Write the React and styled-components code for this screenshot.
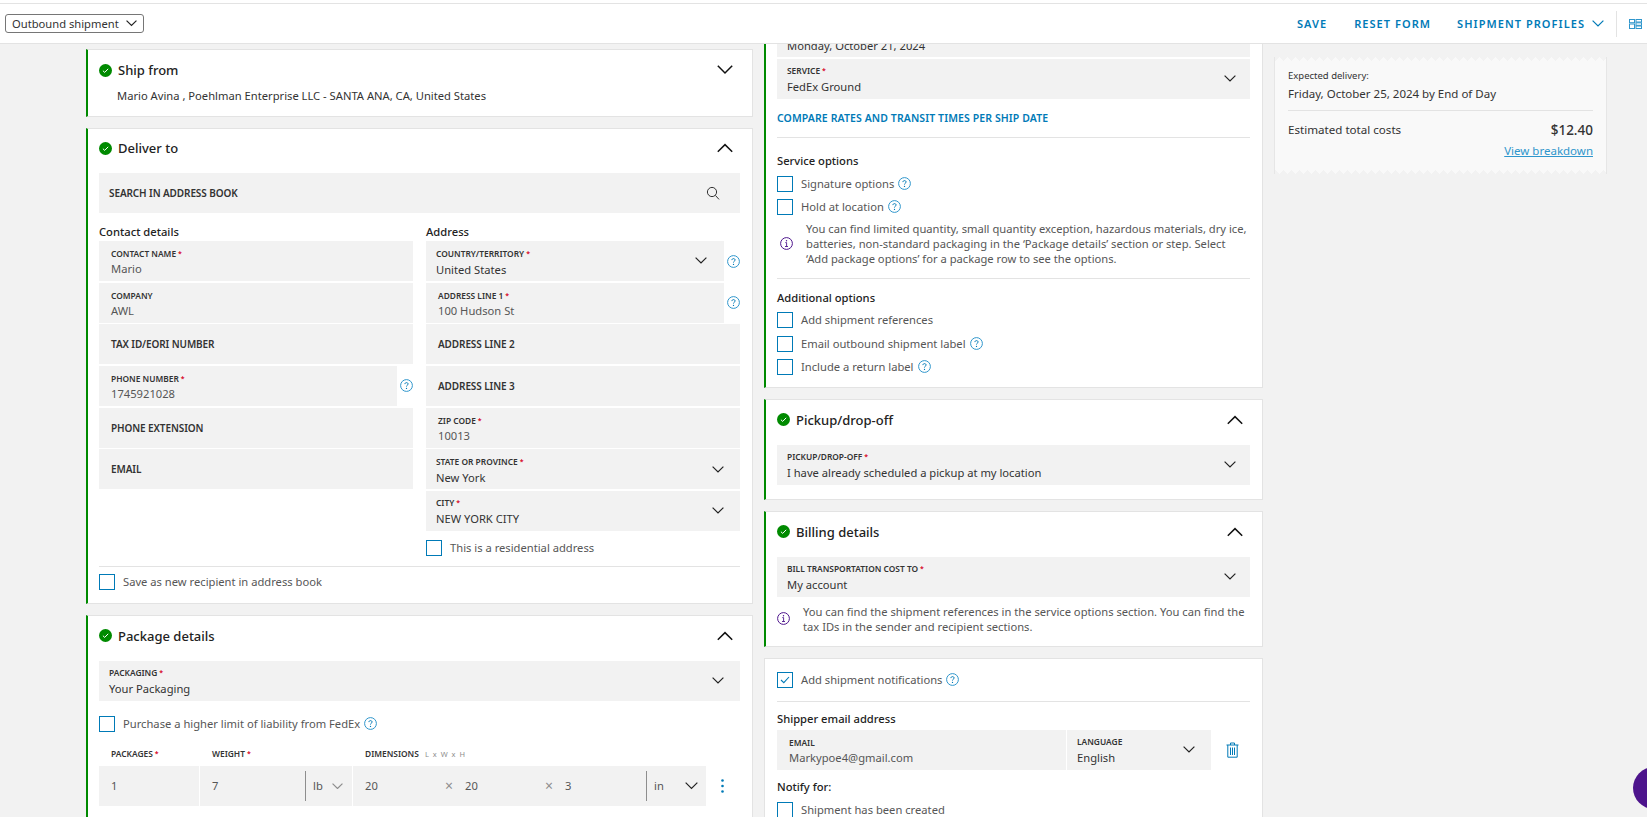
import React from "react";
import styled, { createGlobalStyle } from "styled-components";

const GlobalStyle = createGlobalStyle`
  * { box-sizing: border-box; }
  html, body { margin: 0; height: 100%; overflow: hidden; }
  body {
    background: #f2f2f2;
    font-family: "Noto Sans", "Open Sans", sans-serif;
    color: #333;
  }
`;

const BLUE = "#007ab7";
const FONT_BODY = "11.2px";

const Chevron = ({ up, size = 12, color = "#222", width = 1.2 }) => (
  <svg width={size} height={size * 0.6} viewBox="0 0 20 12" fill="none">
    <path
      d={up ? "M1 11 L10 2 L19 11" : "M1 1 L10 10 L19 1"}
      stroke={color}
      strokeWidth={(width * 20) / size}
    />
  </svg>
);

const Help = () => (
  <HelpIcon width="13" height="13" viewBox="0 0 13 13" fill="none">
    <circle cx="6.5" cy="6.5" r="5.9" stroke="#2f96cc" strokeWidth="1" />
    <path
      d="M4.9 5.1c0-.9.7-1.5 1.6-1.5s1.6.6 1.6 1.4c0 1.2-1.6 1.2-1.6 2.5"
      stroke={BLUE}
      strokeWidth="1"
    />
    <circle cx="6.5" cy="9.4" r=".65" fill={BLUE} />
  </HelpIcon>
);

const Done = () => (
  <DoneIcon width="13" height="13" viewBox="0 0 13 13">
    <circle cx="6.5" cy="6.5" r="6.5" fill="#008a00" />
    <path d="M3.9 6.7 L5.7 8.4 L9.2 4.8" fill="none" stroke="#fff" strokeWidth="1" />
  </DoneIcon>
);

const InfoIcon = () => (
  <svg width="13" height="13" viewBox="0 0 13 13" fill="none">
    <circle cx="6.5" cy="6.5" r="5.9" stroke="#4d148c" strokeWidth="1" />
    <circle cx="6.5" cy="3.8" r=".7" fill="#4d148c" />
    <path d="M5.3 5.6h1.3v3.8M5 9.5h3" stroke="#4d148c" strokeWidth=".9" />
  </svg>
);

const Page = styled.div`
  height: 817px;
  display: flex;
  flex-direction: column;
  overflow: hidden;
`;

const TopStrip = styled.div`
  height: 4px;
  flex: none;
  background: #fff;
  border-bottom: 1px solid #e3e3e3;
`;

const Header = styled.header`
  height: 40px;
  flex: none;
  display: flex;
  align-items: center;
  justify-content: space-between;
  background: #fff;
  border-bottom: 1px solid #e3e3e3;
  padding: 0 5px;
  position: relative;
  z-index: 2;
`;

const ShipmentSelect = styled.div`
  width: 139px;
  height: 19px;
  display: flex;
  align-items: center;
  justify-content: space-between;
  border: 1px solid #767676;
  border-radius: 3px;
  padding: 0 6px;
  font-size: 11.2px;
  color: #333;
`;

const HeaderActions = styled.nav`
  display: flex;
  align-items: center;
  height: 26px;
`;

const HeaderLink = styled.a`
  display: flex;
  align-items: center;
  gap: 7px;
  margin-right: ${(p) => p.$gap}px;
  font-size: 11px;
  font-weight: 600;
  letter-spacing: 1.05px;
  color: ${BLUE};
`;

const HeaderDivider = styled.div`
  width: 1px;
  height: 26px;
  background: #e3e3e3;
  margin-right: 12px;
`;

const Main = styled.main`
  flex: 1;
  min-height: 0;
  overflow: hidden;
  display: grid;
  grid-template-columns: 667px 499px 333px;
  column-gap: 11px;
  align-items: start;
  padding: 5px 0 0 86px;
`;

const Column = styled.div`
  display: flex;
  flex-direction: column;
  gap: 11px;
  margin-top: ${(p) => p.$top || 0}px;
`;

const Card = styled.section`
  background: #fff;
  border: 1px solid #e3e3e3;
  border-left: ${(p) => (p.$plain ? "1px solid #e3e3e3" : "2px solid #008a00")};
  padding: 0 12px ${(p) => p.$bottom || 0}px ${(p) => (p.$plain ? 12 : 11)}px;
`;

const CardHead = styled.div`
  height: ${(p) => p.$height ?? 40}px;
  margin-bottom: ${(p) => p.$after ?? 5}px;
  display: flex;
  align-items: center;
  font-size: 13px;
  font-weight: 500;
  color: #222;
  svg:last-child {
    margin-left: auto;
    margin-right: 7px;
  }
`;

const DoneIcon = styled.svg`
  flex: none;
  margin-right: 6px;
`;

const HelpIcon = styled.svg`
  flex: none;
`;

const Summary = styled.p`
  margin: -2px 0 0;
  padding-left: 18px;
  font-size: ${FONT_BODY};
  line-height: 15px;
  color: #333;
`;

const FieldBox = styled.div`
  flex: ${(p) => p.$flex || "1 1 auto"};
  min-width: 0;
  height: 40px;
  display: flex;
  align-items: center;
  justify-content: space-between;
  background: #f2f2f2;
  padding: 0 ${(p) => p.$right ?? 16}px 0 ${(p) => p.$pad ?? 12}px;
`;

const FieldText = styled.div`
  display: flex;
  flex-direction: column;
  gap: ${(p) => (p.$select ? 3 : 2)}px;
  padding-top: ${(p) => (p.$empty ? 0 : 2)}px;
`;

const Required = styled.i`
  color: #d6001c;
  font-size: 7px;
  font-style: normal;
  margin-left: 2px;
  vertical-align: 1px;
`;

const FieldLabel = styled.span`
  font-size: ${(p) => (p.$big ? "10px" : "8.4px")};
  line-height: 12px;
  font-weight: 600;
  letter-spacing: ${(p) => (p.$big ? "-0.1px" : "0")};
  text-transform: uppercase;
  color: #333;
`;

const FieldValue = styled.span`
  font-size: ${FONT_BODY};
  line-height: 14px;
  color: ${(p) => (p.$dark ? "#333" : "#565656")};
`;

const Field = ({ label, value, required, select, pad, right, flex }) => (
  <FieldBox $pad={pad} $right={right} $flex={flex}>
    <FieldText $select={select} $empty={!value}>
      <FieldLabel $big={!value}>
        {label}
        {required && <Required>*</Required>}
      </FieldLabel>
      {value && <FieldValue $dark={select}>{value}</FieldValue>}
    </FieldText>
    {select && <Chevron />}
  </FieldBox>
);

const Columns = styled.div`
  display: grid;
  grid-template-columns: 1fr 1fr;
  column-gap: 13px;
`;

const GroupLabel = styled.div`
  height: 28px;
  display: flex;
  align-items: flex-end;
  font-size: 11.2px;
  font-weight: 500;
  line-height: 18px;
  color: #222;
`;

const Stack = styled.div`
  display: flex;
  flex-direction: column;
  gap: 1.67px;
`;

const WithHelp = styled.div`
  display: flex;
  align-items: center;
  gap: 3px;
`;

const Check = styled.label`
  display: flex;
  align-items: center;
  gap: 8px;
  height: 16px;
  margin-top: ${(p) => p.$top || 0}px;
  font-size: ${FONT_BODY};
  color: #565656;
  svg {
    margin-left: -4px;
  }
`;

const Box = styled.span`
  flex: none;
  width: 16px;
  height: 16px;
  display: flex;
  align-items: center;
  justify-content: center;
  border: 1px solid ${BLUE};
  svg {
    margin: 0;
  }
`;

const CheckRow = ({ children, top, help, checked }) => (
  <Check $top={top}>
    <Box>
      {checked && (
        <svg width="10" height="8" viewBox="0 0 10 8" fill="none">
          <path d="M1 4 L3.8 6.6 L9 1" stroke={BLUE} strokeWidth="1.1" />
        </svg>
      )}
    </Box>
    {children}
    {help && <Help />}
  </Check>
);

const Divider = styled.hr`
  border: 0;
  height: 1px;
  background: #e3e3e3;
  margin: ${(p) => p.$top}px 0 ${(p) => p.$bottom}px;
`;

const GridHead = styled.div`
  display: grid;
  grid-template-columns: 101px 153px 1fr;
  height: 34px;
  padding-bottom: 6px;
  align-items: flex-end;
`;

const HeadCell = styled.span`
  padding-left: 12px;
  font-size: 8.4px;
  line-height: 12px;
  font-weight: 600;
  color: #333;
  small {
    font-size: 7.5px;
    font-weight: 400;
    color: #8e8e8e;
    letter-spacing: 1px;
    margin-left: 6px;
  }
`;

const PackageRow = styled.div`
  display: flex;
  align-items: center;
`;

const PackageCells = styled.div`
  width: 607px;
  height: 40px;
  display: grid;
  grid-template-columns: 100px 152px 1fr;
  column-gap: 1px;
`;

const PackageCell = styled.div`
  display: flex;
  align-items: center;
  background: #f2f2f2;
  padding-left: 12px;
  font-size: ${FONT_BODY};
  color: #565656;
`;

const DimValue = styled.span`
  width: ${(p) => p.$w}px;
  flex: none;
`;

const Times = styled.span`
  width: 20px;
  flex: none;
  color: #8e8e8e;
  font-size: 14px;
`;

const Unit = styled.div`
  height: 30px;
  width: ${(p) => p.$w}px;
  margin-left: auto;
  flex: none;
  display: flex;
  align-items: center;
  justify-content: space-between;
  border-left: 1px solid #8e8e8e;
  padding: 0 ${(p) => p.$right}px 0 7px;
`;

const Dots = styled.svg`
  margin-left: 15px;
`;

const LinkRow = styled.a`
  display: flex;
  align-items: center;
  height: 38px;
  padding-top: 1px;
  font-size: 10.5px;
  font-weight: 600;
  letter-spacing: 0.1px;
  color: ${BLUE};
`;

const SubHead = styled.h4`
  margin: ${(p) => p.$top || 0}px 0 0;
  font-size: 11.2px;
  line-height: 16px;
  font-weight: 500;
  color: #222;
`;

const Notice = styled.div`
  display: flex;
  align-items: center;
  gap: ${(p) => p.$gap}px;
  padding-left: ${(p) => p.$pad}px;
  margin-top: ${(p) => p.$top}px;
  font-size: ${FONT_BODY};
  line-height: 15px;
  color: #565656;
  svg {
    flex: none;
  }
`;

const EmailRow = styled.div`
  display: flex;
  align-items: center;
  margin-top: 3px;
  gap: 1px;
`;

const Trash = styled.svg`
  margin-left: 14px;
`;

const Receipt = styled.aside`
  position: relative;
  margin-top: 8px;
  height: 117px;
  background: #f9f9f9;
  border-left: 1px solid #e6e6e6;
  border-right: 1px solid #e6e6e6;
  padding: 12px 13px 0;
  &::before,
  &::after {
    content: "";
    position: absolute;
    left: 0;
    right: 0;
    height: 4px;
  }
  &::before {
    top: 0;
    background: linear-gradient(135deg, #f2f2f2 50%, transparent 50%) 0 -4px / 8px 8px repeat-x,
      linear-gradient(225deg, #f2f2f2 50%, transparent 50%) 0 -4px / 8px 8px repeat-x;
  }
  &::after {
    bottom: 0;
    background: linear-gradient(45deg, #f2f2f2 50%, transparent 50%) 0 0 / 8px 8px repeat-x,
      linear-gradient(315deg, #f2f2f2 50%, transparent 50%) 0 0 / 8px 8px repeat-x;
  }
`;

const ReceiptSmall = styled.div`
  font-size: 9.5px;
  line-height: 14px;
  color: #333;
`;

const ReceiptDate = styled.div`
  margin-top: 3px;
  font-size: 11.5px;
  line-height: 16px;
  color: #333;
  padding-bottom: 8px;
  border-bottom: 1px solid #e3e3e3;
`;

const ReceiptTotal = styled.div`
  display: flex;
  justify-content: space-between;
  align-items: center;
  margin-top: 9px;
  font-size: 11.6px;
  line-height: 20px;
  color: #333;
  strong {
    font-size: 13.5px;
    font-weight: 500;
  }
`;

const ReceiptLink = styled.a`
  display: block;
  margin-top: 3px;
  text-align: right;
  font-size: 11.5px;
  line-height: 16px;
  color: #2f96cc;
  text-decoration: underline;
`;

const ChatBubble = styled.div`
  position: fixed;
  left: 1633px;
  top: 767px;
  width: 42px;
  height: 42px;
  border-radius: 50%;
  background: #4d148c;
`;

const Title = ({ children, up }) => (
  <>
    <Done />
    {children}
    <Chevron up={up} size={16} color="#111" width={1.5} />
  </>
);

export default function App() {
  return (
    <Page>
      <GlobalStyle />
      <TopStrip />
      <Header>
        <ShipmentSelect>
          Outbound shipment
          <Chevron size={11} color="#222" />
        </ShipmentSelect>
        <HeaderActions>
          <HeaderLink $gap={27}>SAVE</HeaderLink>
          <HeaderLink $gap={26}>RESET FORM</HeaderLink>
          <HeaderLink $gap={12}>
            SHIPMENT PROFILES
            <Chevron size={12} color={BLUE} />
          </HeaderLink>
          <HeaderDivider />
          <svg width="13" height="10" viewBox="0 0 13 10" fill="none" stroke="#2f96cc" strokeWidth="1">
            <rect x=".5" y=".5" width="5" height="3.2" />
            <rect x=".5" y="5" width="5" height="4.5" />
            <rect x="7" y=".5" width="5.5" height="2.5" />
            <rect x="7" y="3.8" width="5.5" height="2.5" />
            <rect x="7" y="7" width="5.5" height="2.5" />
          </svg>
        </HeaderActions>
      </Header>
      <Main>
        <Column>
          <Card $bottom={13}>
            <CardHead $after={0}>
              <Title>Ship from</Title>
            </CardHead>
            <Summary>Mario Avina , Poehlman Enterprise LLC - SANTA ANA, CA, United States</Summary>
          </Card>

          <Card $bottom={13}>
            <CardHead $height={38} $after={6}>
              <Title up>Deliver to</Title>
            </CardHead>
            <FieldBox $pad={10} $right={20}>
              <FieldLabel $big>Search in address book</FieldLabel>
              <svg width="14" height="14" viewBox="0 0 14 14" fill="none" stroke="#333" strokeWidth="1">
                <circle cx="6" cy="6" r="4.6" />
                <path d="M9.4 9.4 L13 13.4" />
              </svg>
            </FieldBox>
            <Columns>
              <div>
                <GroupLabel>Contact details</GroupLabel>
                <Stack>
                  <Field label="Contact name" value="Mario" required />
                  <Field label="Company" value="AWL" />
                  <Field label="Tax ID/EORI number" />
                  <WithHelp>
                    <Field label="Phone number" value="1745921028" required />
                    <Help />
                  </WithHelp>
                  <Field label="Phone extension" />
                  <Field label="Email" />
                </Stack>
              </div>
              <div>
                <GroupLabel>Address</GroupLabel>
                <Stack>
                  <WithHelp>
                    <Field label="Country/Territory" value="United States" required select pad={10} right={17} />
                    <Help />
                  </WithHelp>
                  <WithHelp>
                    <Field label="Address line 1" value="100 Hudson St" required />
                    <Help />
                  </WithHelp>
                  <Field label="Address line 2" />
                  <Field label="Address line 3" />
                  <Field label="ZIP code" value="10013" required />
                  <Field label="State or province" value="New York" required select pad={10} />
                  <Field label="City" value="NEW YORK CITY" required select pad={10} />
                </Stack>
                <CheckRow top={9}>This is a residential address</CheckRow>
              </div>
            </Columns>
            <Divider $top={10} $bottom={7} />
            <CheckRow>Save as new recipient in address book</CheckRow>
          </Card>

          <Card $bottom={40}>
            <CardHead>
              <Title up>Package details</Title>
            </CardHead>
            <Field label="Packaging" value="Your Packaging" required select pad={10} />
            <CheckRow top={15} help>
              Purchase a higher limit of liability from FedEx
            </CheckRow>
            <GridHead>
              <HeadCell>
                PACKAGES<Required>*</Required>
              </HeadCell>
              <HeadCell>
                WEIGHT<Required>*</Required>
              </HeadCell>
              <HeadCell>
                DIMENSIONS<small>L x W x H</small>
              </HeadCell>
            </GridHead>
            <PackageRow>
              <PackageCells>
                <PackageCell>1</PackageCell>
                <PackageCell>
                  7
                  <Unit $w={47} $right={9}>
                    lb
                    <Chevron size={11} color="#8e8e8e" />
                  </Unit>
                </PackageCell>
                <PackageCell>
                  <DimValue $w={80}>20</DimValue>
                  <Times>×</Times>
                  <DimValue $w={80}>20</DimValue>
                  <Times>×</Times>
                  <DimValue $w={40}>3</DimValue>
                  <Unit $w={60} $right={8}>
                    in
                    <Chevron size={13} />
                  </Unit>
                </PackageCell>
              </PackageCells>
              <Dots width="3" height="14" viewBox="0 0 3 14" fill={BLUE}>
                <circle cx="1.5" cy="1.5" r="1.3" />
                <circle cx="1.5" cy="7" r="1.3" />
                <circle cx="1.5" cy="12.5" r="1.3" />
              </Dots>
            </PackageRow>
          </Card>
        </Column>

        <Column $top={-33}>
          <Card $bottom={12.33}>
            <Stack>
              <Field label="Ship date" value="Monday, October 21, 2024" required select pad={10} right={14} />
              <Field label="Service" value="FedEx Ground" required select pad={10} right={14} />
            </Stack>
            <LinkRow>COMPARE RATES AND TRANSIT TIMES PER SHIP DATE</LinkRow>
            <Divider $top={0} $bottom={15} />
            <SubHead>Service options</SubHead>
            <CheckRow top={7} help>
              Signature options
            </CheckRow>
            <CheckRow top={7} help>
              Hold at location
            </CheckRow>
            <Notice $pad={3} $gap={13} $top={6}>
              <InfoIcon />
              <span>
                You can find limited quantity, small quantity exception, hazardous materials, dry ice,
                <br />
                batteries, non-standard packaging in the ‘Package details’ section or step. Select
                <br />
                ‘Add package options’ for a package row to see the options.
              </span>
            </Notice>
            <Divider $top={12} $bottom={11} />
            <SubHead>Additional options</SubHead>
            <CheckRow top={6}>Add shipment references</CheckRow>
            <CheckRow top={8} help>
              Email outbound shipment label
            </CheckRow>
            <CheckRow top={7} help>
              Include a return label
            </CheckRow>
          </Card>

          <Card $bottom={14}>
            <CardHead>
              <Title up>Pickup/drop-off</Title>
            </CardHead>
            <Field
              label="Pickup/drop-off"
              value="I have already scheduled a pickup at my location"
              required
              select
              pad={10}
              right={14}
            />
          </Card>

          <Card $bottom={12}>
            <CardHead>
              <Title up>Billing details</Title>
            </CardHead>
            <Field label="Bill transportation cost to" value="My account" required select pad={10} right={14} />
            <Notice $pad={0} $gap={13} $top={7}>
              <InfoIcon />
              <span>
                You can find the shipment references in the service options section. You can find the
                <br />
                tax IDs in the sender and recipient sections.
              </span>
            </Notice>
          </Card>

          <Card $plain $bottom={20}>
            <CheckRow top={13} help checked>
              Add shipment notifications
            </CheckRow>
            <Divider $top={13} $bottom={9} />
            <SubHead>Shipper email address</SubHead>
            <EmailRow>
              <Field label="Email" value="Markypoe4@gmail.com" flex="0 0 289px" />
              <Field label="Language" value="English" select flex="0 0 144px" pad={10} right={16} />
              <Trash width="13" height="16" viewBox="0 0 13 16" fill="none" stroke={BLUE} strokeWidth="1">
                <path d="M.5 3h12M4.5 3V1h4v2M1.8 3v12.2h9.4V3M4.5 5.5v7.5M6.5 5.5v7.5M8.5 5.5v7.5" />
              </Trash>
            </EmailRow>
            <SubHead $top={9}>Notify for:</SubHead>
            <CheckRow top={7}>Shipment has been created</CheckRow>
          </Card>
        </Column>

        <Receipt>
          <ReceiptSmall>Expected delivery:</ReceiptSmall>
          <ReceiptDate>Friday, October 25, 2024 by End of Day</ReceiptDate>
          <ReceiptTotal>
            Estimated total costs
            <strong>$12.40</strong>
          </ReceiptTotal>
          <ReceiptLink>View breakdown</ReceiptLink>
        </Receipt>
      </Main>
      <ChatBubble />
    </Page>
  );
}
